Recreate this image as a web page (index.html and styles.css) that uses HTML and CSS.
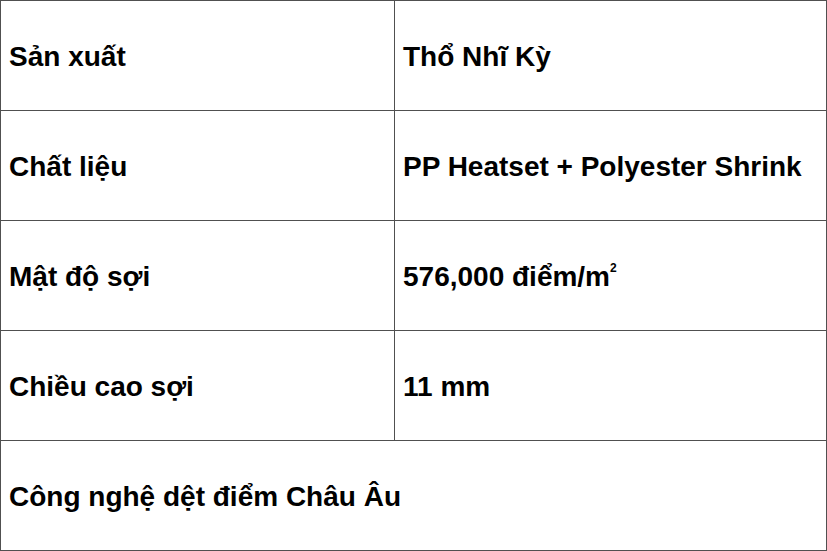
FILE: index.html
```html
<!DOCTYPE html>
<html lang="vi">
<head>
<meta charset="utf-8">
<link rel="stylesheet" href="styles.css">
</head>
<body>
<table class="spec">
  <tr><td class="label">Sản xuất</td><td class="value">Thổ Nhĩ Kỳ</td></tr>
  <tr><td class="label">Chất liệu</td><td class="value">PP Heatset + Polyester Shrink</td></tr>
  <tr><td class="label">Mật độ sợi</td><td class="value">576,000 điểm/m<sup>2</sup></td></tr>
  <tr><td class="label">Chiều cao sợi</td><td class="value">11 mm</td></tr>
  <tr><td class="label" colspan="2">Công nghệ dệt điểm Châu Âu</td></tr>
</table>
</body>
</html>
```
FILE: styles.css
```css
html, body {
  margin: 0;
  padding: 0;
  background: #fff;
}
.spec {
  border-collapse: collapse;
  width: 827px;
  font-family: "Liberation Sans", Arial, sans-serif;
  font-weight: bold;
  font-size: 28px;
  color: #000;
}
.spec td {
  border: 1px solid #505050;
  height: 110px;
  padding: 3px 8px 0;
  box-sizing: border-box;
  vertical-align: middle;
}
.spec .label {
  width: 394px;
}
.spec sup {
  font-size: 12px;
  vertical-align: 14px;
}
```
